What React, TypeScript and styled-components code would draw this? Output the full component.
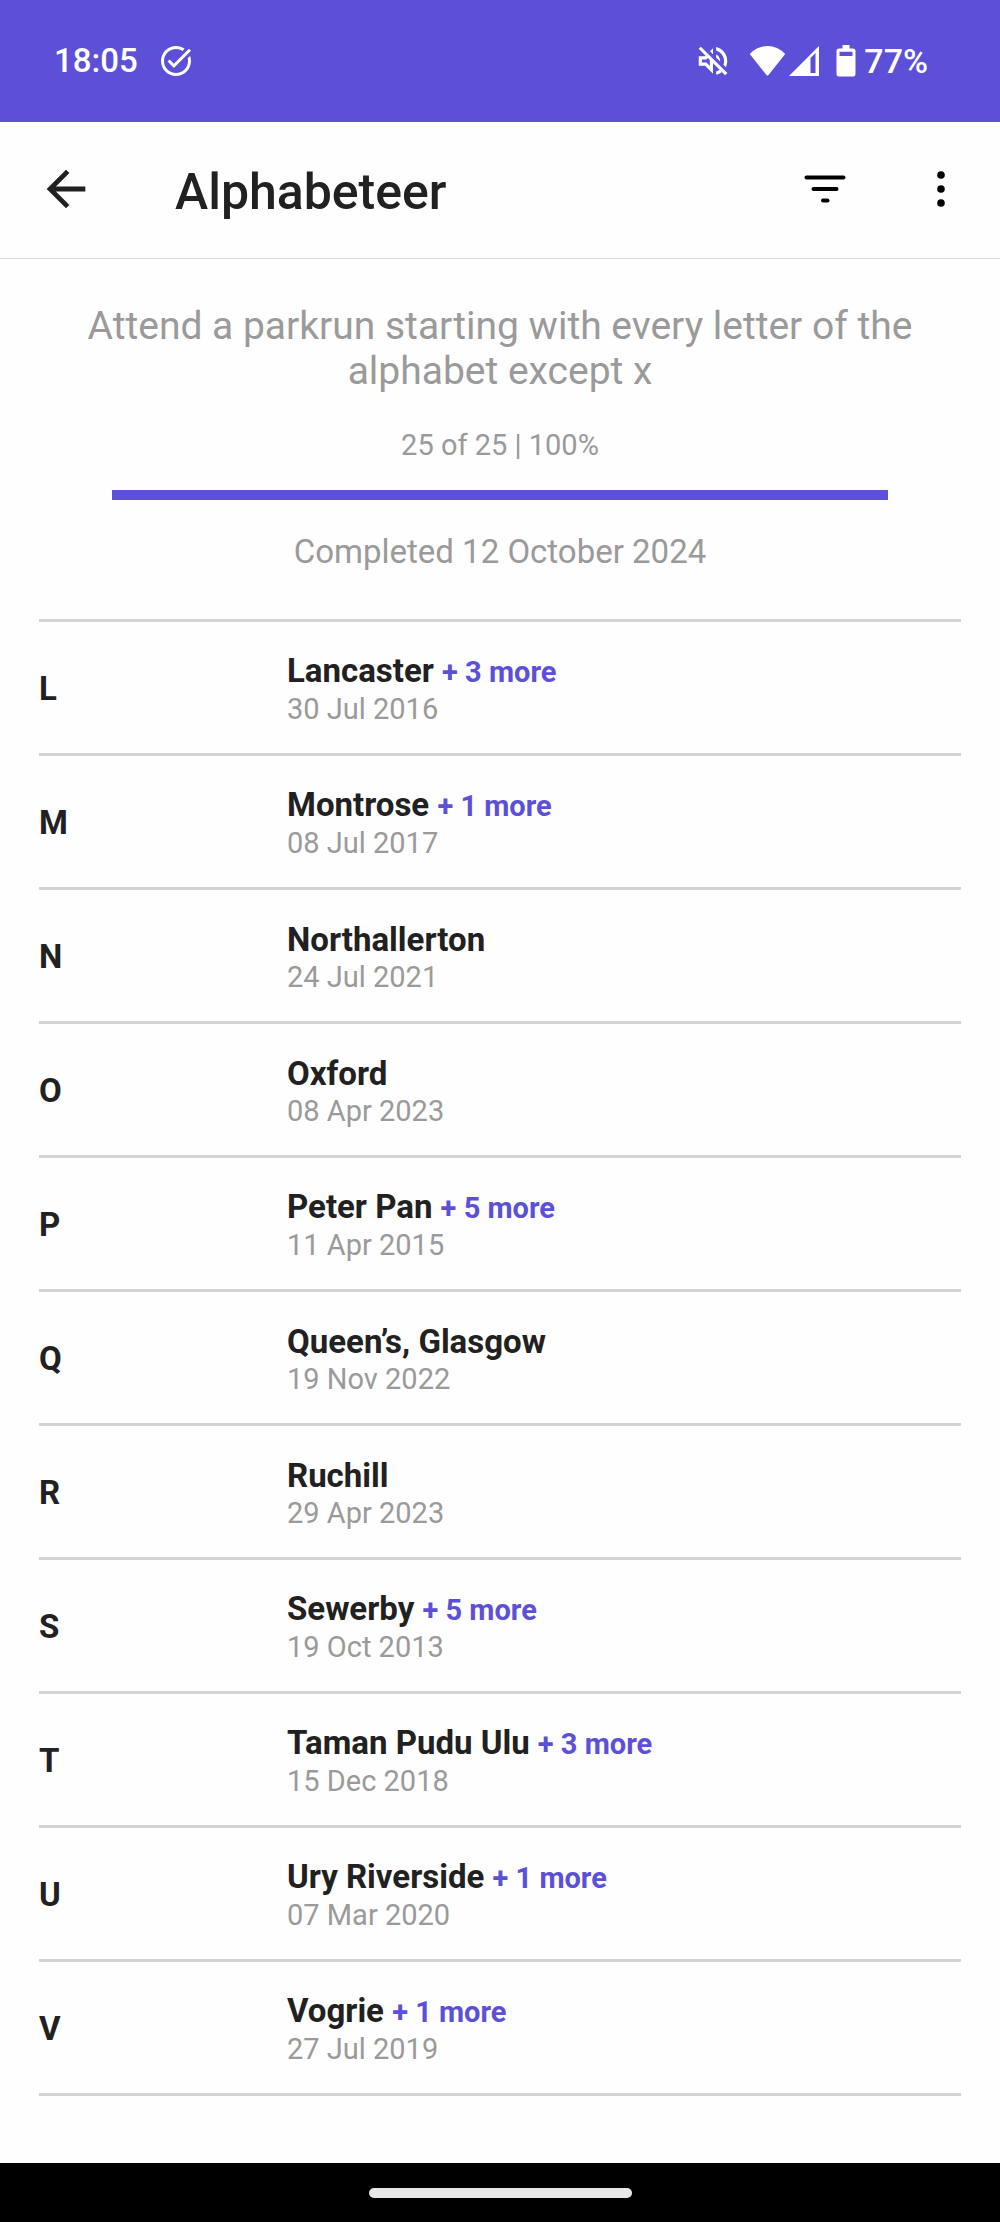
import React from "react";
import styled, { createGlobalStyle } from "styled-components";

const color = {
  brand: "#5d50d8",
  ink: "#212121",
  muted: "#9a9a9a",
  rule: "#d3d3d3",
};

const GlobalStyle = createGlobalStyle`
  *, *::before, *::after { box-sizing: border-box; }
  body {
    margin: 0;
    background: #fefefe;
    color: ${color.ink};
    font-family: Roboto, "Noto Sans", sans-serif;
  }
`;

const Screen = styled.div`
  display: flex;
  flex-direction: column;
  min-height: 100vh;
`;

const StatusBar = styled.div`
  display: flex;
  align-items: center;
  justify-content: space-between;
  height: 122px;
  padding: 0 72px 0 54px;
  background: ${color.brand};
  color: #fff;
  font-size: 33px;
  font-weight: 500;
  line-height: 40px;
`;

const StatusGroup = styled.div`
  display: flex;
  align-items: center;
`;

const StatusIcon = styled.svg<{ $before?: number }>`
  display: block;
  flex: none;
  margin-left: ${(p) => p.$before ?? 0}px;
  fill: currentColor;
`;

const BatteryLevel = styled.span`
  margin-left: 8px;
  font-size: 34px;
`;

const AppBar = styled.header`
  display: flex;
  align-items: center;
  height: 137px;
  padding: 0 30px 2px 37px;
  border-bottom: 1px solid #dcdcdc;
`;

const IconButton = styled.button`
  display: block;
  flex: none;
  width: 58px;
  height: 58px;
  padding: 0;
  border: 0;
  background: none;
  color: ${color.ink};
  cursor: pointer;

  svg {
    display: block;
    fill: currentColor;
  }
`;

const Actions = styled.div`
  display: flex;
  gap: 58px;

  ${IconButton} {
    color: #000;
  }
`;

const Title = styled.h1`
  flex: 1;
  margin: 0;
  padding: 6px 0 0 80px;
  font-size: 50px;
  font-weight: 500;
  line-height: 58px;
`;

const Main = styled.main`
  flex: 1;
`;

const Summary = styled.section`
  padding: 45px 80px 47px;
  color: ${color.muted};
  text-align: center;
`;

const Description = styled.p`
  margin: 0 0 34px;
  font-size: 39px;
  line-height: 45px;
`;

const Count = styled.label`
  display: block;
  margin-bottom: 28px;
  font-size: 29px;
  line-height: 34px;
`;

const ProgressBar = styled.progress`
  display: block;
  appearance: none;
  width: calc(100% - 64px);
  height: 10px;
  margin: 0 auto 32px;
  border: 0;
  background: #e0e0e0;

  &::-webkit-progress-bar {
    background: #e0e0e0;
  }
  &::-webkit-progress-value {
    background: ${color.brand};
  }
`;

const Completed = styled.p`
  margin: 0;
  font-size: 33px;
  line-height: 40px;
`;

const Letters = styled.ul`
  margin: 0 39px;
  padding: 0;
  border-top: 3px solid ${color.rule};
  list-style: none;
`;

const LetterRow = styled.li`
  display: grid;
  grid-template-columns: 248px 1fr;
  align-items: center;
  min-height: 134px;
  padding-top: 2px;
  border-bottom: 3px solid ${color.rule};
`;

const Letter = styled.span`
  font-size: 33px;
  font-weight: 700;
  line-height: 40px;
`;

const EventName = styled.div`
  font-size: 33px;
  font-weight: 700;
  line-height: 40px;
`;

const More = styled.a`
  color: ${color.brand};
  font-size: 29px;
  text-decoration: none;
`;

const EventDate = styled.div`
  color: ${color.muted};
  font-size: 29px;
  line-height: 34px;
`;

const NavBar = styled.footer`
  display: flex;
  align-items: center;
  justify-content: center;
  height: 59px;
  background: #000;
`;

const HomeHandle = styled.div`
  width: 263px;
  height: 10px;
  border-radius: 5px;
  background: #e8e8e8;
`;

type Entry = { letter: string; name: string; date: string; more?: number };

const entries: Entry[] = [
  { letter: "L", name: "Lancaster", date: "30 Jul 2016", more: 3 },
  { letter: "M", name: "Montrose", date: "08 Jul 2017", more: 1 },
  { letter: "N", name: "Northallerton", date: "24 Jul 2021" },
  { letter: "O", name: "Oxford", date: "08 Apr 2023" },
  { letter: "P", name: "Peter Pan", date: "11 Apr 2015", more: 5 },
  { letter: "Q", name: "Queen’s, Glasgow", date: "19 Nov 2022" },
  { letter: "R", name: "Ruchill", date: "29 Apr 2023" },
  { letter: "S", name: "Sewerby", date: "19 Oct 2013", more: 5 },
  { letter: "T", name: "Taman Pudu Ulu", date: "15 Dec 2018", more: 3 },
  { letter: "U", name: "Ury Riverside", date: "07 Mar 2020", more: 1 },
  { letter: "V", name: "Vogrie", date: "27 Jul 2019", more: 1 },
];

const TaskDoneIcon = () => (
  <StatusIcon $before={20} width="36" height="36" viewBox="0 0 24 24" aria-hidden="true">
    <path d="M22 5.18 10.59 16.6l-4.24-4.24 1.41-1.41 2.83 2.83 10-10L22 5.18zm-2.21 5.04c.13.57.21 1.17.21 1.78 0 4.42-3.58 8-8 8s-8-3.58-8-8 3.58-8 8-8c1.58 0 3.04.46 4.28 1.25l1.44-1.44C16.1 2.67 14.13 2 12 2 6.48 2 2 6.48 2 12s4.48 10 10 10 10-4.48 10-10c0-1.19-.22-2.33-.6-3.39l-1.61 1.61z" />
  </StatusIcon>
);

const MutedIcon = () => (
  <StatusIcon width="38" height="38" viewBox="0 0 24 24" aria-hidden="true">
    <path d="M4.34 2.93 2.93 4.34 7.29 8.7 7 9H3v6h4l5 5v-6.59l4.18 4.18c-.65.49-1.38.88-2.18 1.11v2.06c1.34-.3 2.57-.92 3.61-1.75l2.05 2.05 1.41-1.41L4.34 2.93zM10 15.17 7.83 13H5v-2h2.83l.88-.88L10 11.41v3.76zM19 12c0 .82-.15 1.61-.41 2.34l1.53 1.53c.56-1.17.88-2.48.88-3.87 0-4.28-2.99-7.86-7-8.77v2.06c2.89.86 5 3.54 5 6.71zm-7-8-1.88 1.88L12 7.76V4zm4.5 8c0-1.77-1.02-3.29-2.5-4.03v1.79l2.48 2.48c.01-.08.02-.16.02-.24z" />
  </StatusIcon>
);

const WifiIcon = () => (
  <StatusIcon $before={17} width="37" height="32" viewBox="0 0 37 32" aria-hidden="true">
    <path d="M.8 9C10.500-1.700 26.500-1.700 36.200 9L19.300 30.300Q18.500 31.200 17.700 30.300Z" />
  </StatusIcon>
);

const SignalIcon = () => (
  <StatusIcon $before={2} width="32" height="32" viewBox="0 0 32 32" aria-hidden="true">
    <path fillRule="evenodd" d="M1 31 31 1v30zM22.500 13v15h5V8z" />
  </StatusIcon>
);

const BatteryIcon = () => (
  <StatusIcon $before={16} width="20" height="32" viewBox="0 0 20 32" aria-hidden="true">
    <path
      fillRule="evenodd"
      d="M6.500 0h7v3.500H17q2.500 0 2.500 2.500v23q0 2.500-2.500 2.500H3Q.5 31.500.5 29V6Q.5 3.500 3 3.500h3.500zM3.500 6.700v4.300h13V6.700z"
    />
  </StatusIcon>
);

const BackIcon = () => (
  <svg width="58" height="58" viewBox="0 0 24 24" aria-hidden="true">
    <path d="M20 11H7.830l5.590-5.590L12 4l-8 8 8 8 1.410-1.410L7.830 13H20v-2z" />
  </svg>
);

const FilterIcon = () => (
  <svg width="58" height="58" viewBox="0 0 58 58" aria-hidden="true">
    <rect x="8.500" y="15.500" width="41" height="4" rx="2" />
    <rect x="15.500" y="27" width="27" height="4" rx="2" />
    <rect x="25" y="38.500" width="8.500" height="4" rx="2" />
  </svg>
);

const MoreIcon = () => (
  <svg width="58" height="58" viewBox="0 0 58 58" aria-hidden="true">
    <circle cx="29" cy="15" r="3.800" />
    <circle cx="29" cy="29" r="3.800" />
    <circle cx="29" cy="43" r="3.800" />
  </svg>
);

export default function App() {
  return (
    <Screen>
      <GlobalStyle />
      <StatusBar>
        <StatusGroup>
          <span>18:05</span>
          <TaskDoneIcon />
        </StatusGroup>
        <StatusGroup>
          <MutedIcon />
          <WifiIcon />
          <SignalIcon />
          <BatteryIcon />
          <BatteryLevel>77%</BatteryLevel>
        </StatusGroup>
      </StatusBar>
      <AppBar>
        <IconButton type="button" aria-label="Back">
          <BackIcon />
        </IconButton>
        <Title>Alphabeteer</Title>
        <Actions>
          <IconButton type="button" aria-label="Filter">
            <FilterIcon />
          </IconButton>
          <IconButton type="button" aria-label="More options">
            <MoreIcon />
          </IconButton>
        </Actions>
      </AppBar>
      <Main>
        <Summary>
          <Description>
            Attend a parkrun starting with every letter of the alphabet except x
          </Description>
          <Count htmlFor="challenge-progress">25 of 25 | 100%</Count>
          <ProgressBar id="challenge-progress" value={25} max={25} />
          <Completed>Completed 12 October 2024</Completed>
        </Summary>
        <Letters>
          {entries.map((entry) => (
            <LetterRow key={entry.letter}>
              <Letter>{entry.letter}</Letter>
              <div>
                <EventName>
                  {entry.name}
                  {entry.more && (
                    <>
                      {" "}
                      <More href={`#${entry.letter}`}>+ {entry.more} more</More>
                    </>
                  )}
                </EventName>
                <EventDate>{entry.date}</EventDate>
              </div>
            </LetterRow>
          ))}
        </Letters>
      </Main>
      <NavBar>
        <HomeHandle />
      </NavBar>
    </Screen>
  );
}
